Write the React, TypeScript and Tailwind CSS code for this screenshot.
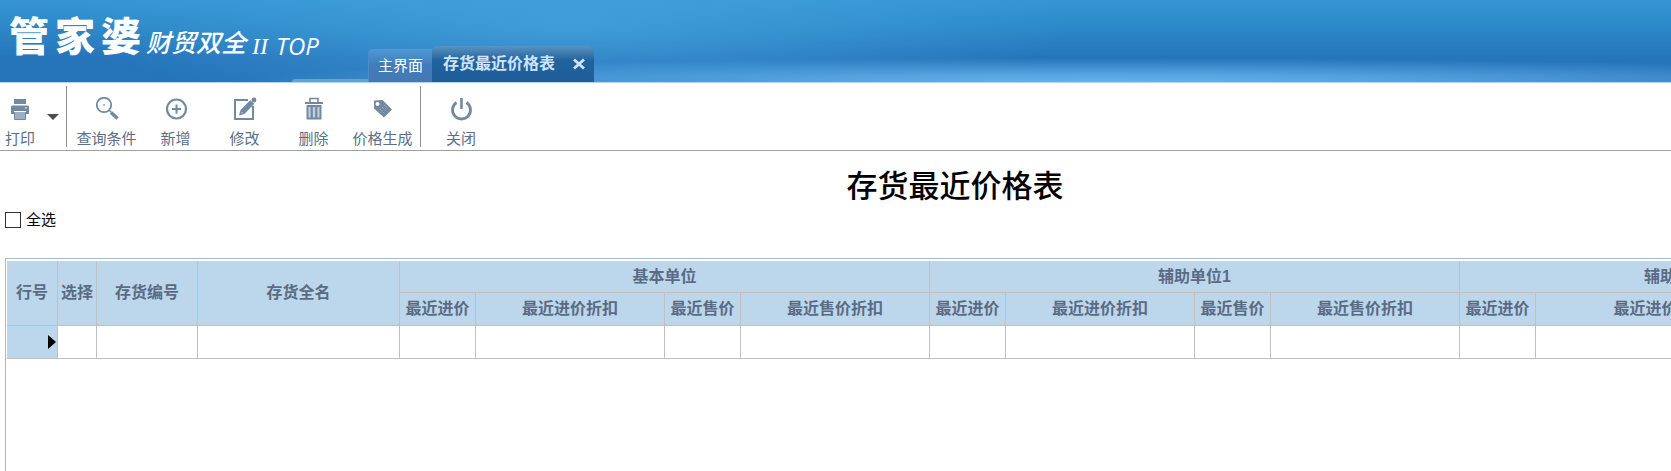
import type { ReactNode } from "react";

function ToolIcon({ children }: { children: ReactNode }) {
  return (
    <svg viewBox="0 0 24 24" className="h-6 w-6" fill="none" stroke="#7189a3" aria-hidden="true">
      {children}
    </svg>
  );
}

const PrinterIcon = (
  <ToolIcon>
    <g fill="#7189a3" stroke="none">
      <path d="M6 2h12v5H6z" />
      <path d="M4.500 8.500h15a1.500 1.500 0 0 1 1.500 1.500v7h-3v-3H6v3H3v-7a1.500 1.500 0 0 1 1.500-1.500z" />
      <path d="M7 15h10v7H7z" fill="#9db0c4" />
    </g>
    <path d="M17 11h2" stroke="#fff" />
    <path d="M6.500 15v7.500h11V15" />
  </ToolIcon>
);

const SearchIcon = (
  <ToolIcon>
    <circle cx="9" cy="8" r="7.200" strokeWidth="1.800" />
    <path d="M8 8h2M9 7v2" strokeWidth="1" opacity=".7" />
    <path d="M14.300 13.300l2 2" strokeWidth="1.500" />
    <path d="M16 15.500l6.500 6" strokeWidth="3.500" />
  </ToolIcon>
);

const AddIcon = (
  <ToolIcon>
    <circle cx="12.500" cy="12" r="9.500" strokeWidth="2.200" />
    <path d="M12.500 7.500v9M8 12h9" strokeWidth="2" />
  </ToolIcon>
);

const EditIcon = (
  <ToolIcon>
    <path d="M15 3H2v19h18V9" strokeWidth="2" />
    <path d="M6 18.500l1.500-5.500L17.500 3l4 3.500L11.500 17z" fill="#7189a3" stroke="none" />
    <path d="M8.500 15l1.500 1.500" stroke="#dbe2ea" />
    <path d="M17 2.500l4.500 4" stroke="#fff" strokeWidth=".8" />
    <circle cx="21" cy="3" r="2.400" fill="#7189a3" stroke="none" />
  </ToolIcon>
);

const DeleteIcon = (
  <ToolIcon>
    <path d="M8 5V1.500h8V5" strokeWidth="1.600" />
    <path d="M3 6h18" strokeWidth="2" />
    <path d="M5.500 9v12.500h13V9z" strokeWidth="2" fill="#c3ced9" />
    <path d="M9.700 9v13M14.300 9v13" strokeWidth="2.200" />
  </ToolIcon>
);

const TagIcon = (
  <ToolIcon>
    <path d="M3 3.500l8.500-.5L21 12.500l-8 8L3 11.500z" fill="#7189a3" stroke="none" />
    <circle cx="6.500" cy="7" r="2" fill="#fff" stroke="none" />
    <path d="M9 12l4.500 4.500M11 10l4.500 4.500M13 8l4.500 4.500" stroke="#a3b4c6" strokeDasharray="1 1" />
  </ToolIcon>
);

const PowerIcon = (
  <ToolIcon>
    <path d="M12.500 1v11" strokeWidth="2.600" />
    <path d="M7.500 5.500a9 9 0 1 0 10 0" strokeWidth="2.800" />
  </ToolIcon>
);

function ToolButton({ label, icon, className }: { label: string; icon: ReactNode; className: string }) {
  return (
    <button type="button" className={`flex flex-col items-center gap-2 whitespace-nowrap ${className}`}>
      {icon}
      <span className="text-[15px] leading-5">{label}</span>
    </button>
  );
}

const actions = [
  { label: "查询条件", icon: SearchIcon },
  { label: "新增", icon: AddIcon },
  { label: "修改", icon: EditIcon },
  { label: "删除", icon: DeleteIcon },
  { label: "价格生成", icon: TagIcon },
];

const columnWidths = [51, 39, 101, 202, 76, 189, 76, 189, 76, 189, 76, 189, 76, 252, 114];

const groups = [
  { name: "基本单位", columns: ["最近进价", "最近进价折扣", "最近售价", "最近售价折扣"] },
  { name: "辅助单位1", columns: ["最近进价", "最近进价折扣", "最近售价", "最近售价折扣"] },
  { name: "辅助单位2", columns: ["最近进价", "最近进价折扣", "最近售价"] },
];

const cell = "border-r border-b border-[#c0c0c0] p-0 whitespace-nowrap";

function Header() {
  return (
    <header className="relative flex h-[83px] items-end border-b border-[#b0d6f1] bg-[radial-gradient(ellipse_52%_24px_at_66%_100%,#66b4ed_0%,#5fadE8cc_35%,transparent_100%),radial-gradient(ellipse_30%_90px_at_34%_30%,#4aa6e0aa_0%,transparent_100%),linear-gradient(180deg,#3795d4_0%,#2e8bca_28%,#2675ba_70%,#2574b9_100%)]">
      <Brand />
      <Tabs />
      <span className="absolute bottom-0 left-[292px] h-[3px] w-[76px] rounded-tl-full bg-[#62a4da]" />
    </header>
  );
}

function Brand() {
  return (
    <div className="flex h-full w-[368px] shrink-0 items-start pl-[9px] text-white">
      <div className="flex gap-[6px] pt-4 text-[40px] leading-[42px] font-black">
        <span>管</span>
        <span>家</span>
        <span>婆</span>
      </div>
      <span className="pt-[28px] pl-[5px] text-[25px] leading-[30px] font-medium italic">财贸双全</span>
      <span className="flex gap-2 pt-[31px] pl-[6px] leading-[30px] italic">
        <span className="font-['Liberation_Serif',serif] text-[24px]">II</span>
        <span className="font-['Open_Sans',sans-serif] text-[24px]">TOP</span>
      </span>
    </div>
  );
}

function Tabs() {
  return (
    <nav className="flex items-end">
      <button
        type="button"
        className="h-[33px] w-16 rounded-tl-sm border-l border-[#4a8fcb] bg-linear-to-b from-[#4d9ad6] via-[#427cb9] to-[#4379b5] pt-[2px] text-[15px] text-white"
      >
        主界面
      </button>
      <div className="flex h-9 w-[162px] items-center justify-between rounded-t-md bg-linear-to-b from-[#5a93c0] via-[#21639f] via-40% to-[#1f5d99] pr-2 pl-[11px] text-[#cfe4fb]">
        <a href="#prices" className="text-[16px] font-bold whitespace-nowrap">
          存货最近价格表
        </a>
        <button type="button" aria-label="关闭标签" className="p-px">
          <svg viewBox="0 0 12 12" className="h-3 w-3" stroke="currentColor" strokeWidth="2.800" aria-hidden="true">
            <path d="M1 1.500l10 9M11 1.500l-10 9" />
          </svg>
        </button>
      </div>
    </nav>
  );
}

function Toolbar() {
  return (
    <div className="flex h-[68px] items-start border-b border-[#a0a0a0] pt-[3px] text-[#5b6f88]">
      <div className="flex w-[66px] shrink-0">
        <ToolButton label="打印" icon={PrinterIcon} className="w-10 pt-[11px]" />
        <button type="button" aria-label="打印选项" className="flex w-[26px] justify-center pt-[28px]">
          <svg viewBox="0 0 12 6" className="h-[6px] w-3" fill="#4d4d4d" aria-hidden="true">
            <path d="M0 0h12L6 6z" />
          </svg>
        </button>
      </div>
      <span className="h-[61px] w-px bg-[#909090]" />
      <div className="flex pr-[3px] pl-[5px]">
        {actions.map((a) => (
          <ToolButton key={a.label} label={a.label} icon={a.icon} className="w-[69px] pt-[11px]" />
        ))}
      </div>
      <span className="h-[61px] w-px bg-[#909090]" />
      <ToolButton label="关闭" icon={PowerIcon} className="w-20 pt-[11px]" />
    </div>
  );
}

function PriceTable() {
  return (
    <div id="prices" className="ml-[5px] min-h-[213px] border-t border-l border-[#a0bcd8] pt-[2px] pl-px">
      <table className="w-[1895px] table-fixed border-separate border-spacing-0">
        <colgroup>
          {columnWidths.map((w, i) => (
            <col key={i} style={{ width: w }} />
          ))}
        </colgroup>
        <thead className="bg-[#bcd7ec] text-[16px] leading-5 text-[#5b6b84]">
          <tr className="h-8">
            {["行号", "选择", "存货编号", "存货全名"].map((h) => (
              <th key={h} rowSpan={2} className={cell}>
                {h}
              </th>
            ))}
            {groups.map((g) => (
              <th key={g.name} colSpan={g.columns.length} className={cell}>
                {g.name}
              </th>
            ))}
          </tr>
          <tr className="h-[33px]">
            {groups.map((g) =>
              g.columns.map((c) => (
                <th key={g.name + c} className={cell}>
                  {c}
                </th>
              )),
            )}
          </tr>
        </thead>
        <tbody>
          <tr className="h-[33px]">
            <td className={`${cell} bg-[#bcd7ec]`}>
              <svg viewBox="0 0 8 14" className="mr-px ml-auto h-[14px] w-2" fill="#000" aria-hidden="true">
                <path d="M0 0l8 7-8 7z" />
              </svg>
            </td>
            {columnWidths.slice(1).map((_, i) => (
              <td key={i} className={cell} />
            ))}
          </tr>
        </tbody>
      </table>
    </div>
  );
}

export default function App() {
  return (
    <div className="overflow-hidden bg-white font-['Liberation_Sans','Noto_Sans_CJK_SC',sans-serif]">
      <Header />
      <Toolbar />
      <main className="w-[1910px]">
        <h1 className="pt-4 text-center text-[31px] leading-10 font-medium text-black">存货最近价格表</h1>
        <label className="flex h-[51px] w-fit items-start gap-[5px] pt-[3px] pl-[5px] text-[15px] leading-5 text-black">
          <input type="checkbox" className="mt-[2px] h-4 w-4 appearance-none border border-[#333] bg-white" />
          全选
        </label>
        <PriceTable />
      </main>
    </div>
  );
}
